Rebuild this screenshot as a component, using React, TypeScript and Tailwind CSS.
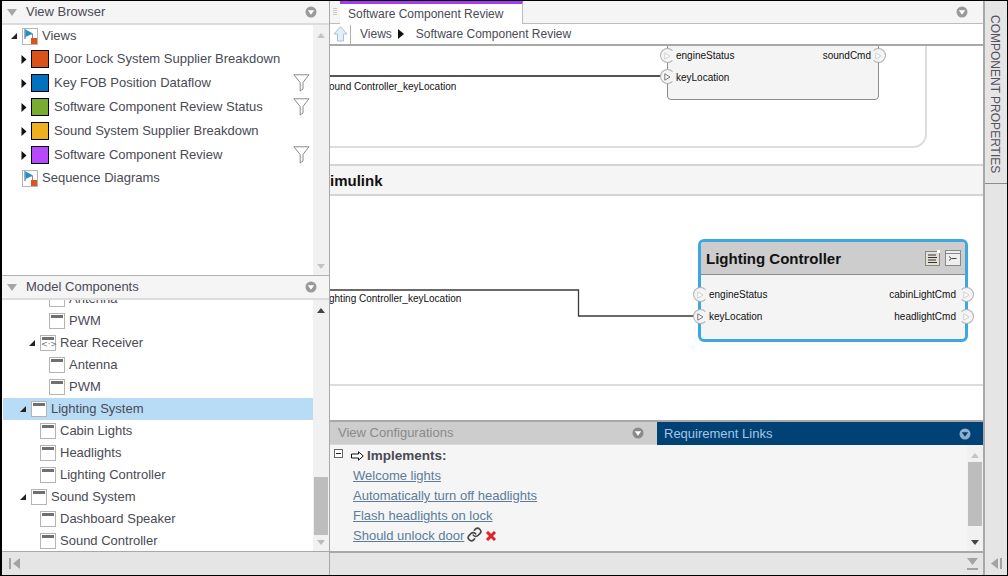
import React from "react";
import { Link } from "lucide-react";

const FONT = "font-['Liberation_Sans',Arial,sans-serif]";

function Chevron({ fill = "#9a9a9a", tri = "#ffffff" }: { fill?: string; tri?: string }) {
  return (
    <svg width="12" height="12" viewBox="0 0 12 12" className="shrink-0">
      <circle cx="6" cy="6" r="5.5" fill={fill} />
      <path d="M2.8 4.2 H9.2 L6 8.8 Z" fill={tri} />
    </svg>
  );
}

function PanelHeader({ title }: { title: string }) {
  return (
    <div className="h-[24px] shrink-0 flex items-center bg-[#f5f5f5] border-b-2 border-[#dcdcdc] pl-[5px] pr-[12px]">
      <svg width="10" height="7" viewBox="0 0 10 7" className="shrink-0">
        <path d="M0 0 H10 L5 7 Z" fill="#a6a6a6" />
      </svg>
      <span className="ml-[9px] flex-1 text-[13px] text-[#4a4a55]">{title}</span>
      <Chevron />
    </div>
  );
}

function TreeArrow({ open }: { open?: boolean }) {
  return open ? (
    <svg width="6" height="6" viewBox="0 0 6 6" className="shrink-0">
      <path d="M6 0 V6 H0 Z" fill="#222" />
    </svg>
  ) : (
    <svg width="6" height="9" viewBox="0 0 6 9" className="shrink-0">
      <path d="M0.5 0 L5.5 4.5 L0.5 9 Z" fill="#111" />
    </svg>
  );
}

function ViewsIcon() {
  return (
    <svg width="16" height="17" viewBox="0 0 16 17" className="shrink-0">
      <rect x="0.5" y="0.5" width="15" height="16" fill="#fff" stroke="#b5b5b5" />
      <path d="M3 1 V11" stroke="#2c5f8a" strokeWidth="1" />
      <path d="M3.5 1.5 L11 5.5 L3.5 9 Z" fill="#1f8fc4" />
      <path d="M9 6 H10.5 V10" stroke="#888" fill="none" />
      <rect x="9" y="10" width="6" height="6" fill="#d9541e" />
    </svg>
  );
}

function CompIcon({ code }: { code?: boolean }) {
  return (
    <div className="w-[16px] h-[16px] shrink-0 border border-[#b4b4b4] bg-white flex flex-col">
      <div className="h-[3px] mx-[1px] mt-[1px] bg-[#707070]" />
      {code && (
        <span className="text-[8px] leading-[10px] text-center text-[#777] font-['DejaVu_Sans',sans-serif]">{"<·>"}</span>
      )}
    </div>
  );
}

function Filter() {
  return (
    <svg width="17" height="18" viewBox="0 0 17 18" className="shrink-0">
      <path d="M0.8 0.8 H16 L10 8.5 V15 L7.2 17 V8.5 Z" fill="#fff" stroke="#8a8a8a" />
    </svg>
  );
}

function ViewRow({ color, label, filter }: { color: string; label: string; filter?: boolean }) {
  return (
    <div className="h-[24px] flex items-center pl-[19px] pr-[3px]">
      <TreeArrow />
      <div className="ml-[4px] w-[18px] h-[18px] border border-black shrink-0" style={{ backgroundColor: color }} />
      <span className="ml-[5px] flex-1 text-[13px] text-[#4a4a55] whitespace-nowrap">{label}</span>
      {filter && <Filter />}
    </div>
  );
}

function CompRow({
  indent,
  label,
  open,
  code,
  selected,
}: {
  indent: string;
  label: string;
  open?: boolean;
  code?: boolean;
  selected?: boolean;
}) {
  return (
    <div className={`h-[22px] flex items-center ${indent} ${selected ? "bg-[#b9dcf6]" : ""}`}>
      {open && <TreeArrow open />}
      <div className={open ? "ml-[5px]" : ""}>
        <CompIcon code={code} />
      </div>
      <span className="ml-[4px] text-[13px] text-[#4a4a55] whitespace-nowrap">{label}</span>
    </div>
  );
}

function Scrollbar({
  upColor,
  downColor,
  thumbTop,
  thumbHeight,
  bg,
}: {
  upColor: string;
  downColor: string;
  thumbTop?: number;
  thumbHeight?: number;
  bg: string;
}) {
  return (
    <div className={`w-[16px] shrink-0 relative ${bg}`}>
      <svg width="8" height="5" viewBox="0 0 8 5" className="absolute left-[4px] top-[8px]">
        <path d="M0 5 H8 L4 0 Z" fill={upColor} />
      </svg>
      {thumbHeight !== undefined && (
        <div
          className="absolute left-[1px] right-[1px] bg-[#bdbdbd]"
          style={{ top: thumbTop, height: thumbHeight }}
        />
      )}
      <svg width="8" height="5" viewBox="0 0 8 5" className="absolute left-[4px] bottom-[6px]">
        <path d="M0 0 H8 L4 5 Z" fill={downColor} />
      </svg>
    </div>
  );
}

function Port({ dark, right, className }: { dark?: boolean; right?: boolean; className: string }) {
  return (
    <div
      className={`absolute w-[15px] h-[15px] rounded-full border border-[#b0b0b0] bg-[#f4f4f4] flex items-center justify-center ${
        right ? "border-l-transparent" : "border-r-transparent"
      } ${className}`}
    >
      <svg width="7" height="8" viewBox="0 0 7 8">
        <path d="M0.8 0.8 L6 4 L0.8 7.2 Z" fill="#fff" stroke={dark ? "#777" : "#cfcfcf"} />
      </svg>
    </div>
  );
}

function Label({ className, children }: { className: string; children: React.ReactNode }) {
  return <span className={`absolute text-[10px] leading-[13px] text-[#111] whitespace-nowrap ${className}`}>{children}</span>;
}

export default function App() {
  return (
    <div className={`${FONT} w-[1008px] h-[576px] border border-black flex bg-white overflow-hidden`}>
      {/* Left column */}
      <div className="w-[329px] shrink-0 flex flex-col border-r border-[#a8a8a8] border-l border-l-black">
        <PanelHeader title="View Browser" />
        <div className="h-[251px] shrink-0 flex border-b border-[#b0b0b0]">
          <div className="flex-1 min-w-0">
            <div className="h-[22px] flex items-center pl-[9px]">
              <TreeArrow open />
              <div className="ml-[5px]">
                <ViewsIcon />
              </div>
              <span className="ml-[4px] text-[13px] text-[#4a4a55]">Views</span>
            </div>
            <ViewRow color="#d95319" label="Door Lock System Supplier Breakdown" />
            <ViewRow color="#0072bd" label="Key FOB Position Dataflow" filter />
            <ViewRow color="#77ac30" label="Software Component Review Status" filter />
            <ViewRow color="#edb120" label="Sound System Supplier Breakdown" />
            <ViewRow color="#b748fb" label="Software Component Review" filter />
            <div className="h-[22px] flex items-center pl-[20px]">
              <ViewsIcon />
              <span className="ml-[4px] text-[13px] text-[#4a4a55]">Sequence Diagrams</span>
            </div>
          </div>
          <Scrollbar upColor="#c4c4c4" downColor="#c4c4c4" bg="bg-[#f1f1f1]" />
        </div>
        <PanelHeader title="Model Components" />
        <div className="h-[251px] shrink-0 flex overflow-hidden">
          <div className="flex-1 min-w-0 pl-[1px] overflow-hidden">
            <div className="-mt-[12px]">
              <CompRow indent="pl-[46px]" label="Antenna" />
              <CompRow indent="pl-[46px]" label="PWM" />
              <CompRow indent="pl-[26px]" label="Rear Receiver" open code />
              <CompRow indent="pl-[46px]" label="Antenna" />
              <CompRow indent="pl-[46px]" label="PWM" />
              <CompRow indent="pl-[17px]" label="Lighting System" open selected />
              <CompRow indent="pl-[37px]" label="Cabin Lights" />
              <CompRow indent="pl-[37px]" label="Headlights" />
              <CompRow indent="pl-[37px]" label="Lighting Controller" />
              <CompRow indent="pl-[17px]" label="Sound System" open />
              <CompRow indent="pl-[37px]" label="Dashboard Speaker" />
              <CompRow indent="pl-[37px]" label="Sound Controller" />
            </div>
          </div>
          <Scrollbar upColor="#444" downColor="#bbb" thumbTop={177} thumbHeight={58} bg="bg-[#f1f1f1]" />
        </div>
        <div className="flex-1 bg-[#e5e5e5] border-t border-[#a8a8a8] flex items-center pl-[7px]">
          <svg width="11" height="11" viewBox="0 0 11 11">
            <rect x="0" y="0" width="2" height="11" fill="#a3a3a3" />
            <path d="M11 0 V11 L4 5.5 Z" fill="#a3a3a3" />
          </svg>
        </div>
      </div>

      {/* Main column */}
      <div className="flex-1 min-w-0 flex flex-col">
        {/* Tab strip */}
        <div className="h-[23px] shrink-0 flex bg-[#f5f5f5] border-b border-[#bdbdbd] pr-[15px]">
          <div className="w-[10px] flex flex-col gap-[1px] pt-[7px] pl-[3px]">
            <div className="w-[4px] h-[1px] bg-[#c8c8c8]" />
            <div className="w-[4px] h-[1px] bg-[#c8c8c8]" />
            <div className="w-[4px] h-[1px] bg-[#c8c8c8]" />
            <div className="w-[4px] h-[1px] bg-[#c8c8c8]" />
          </div>
          <div className="w-[183px] -mb-px bg-white border-t-[3px] border-[#a63cf0] border-r border-r-[#bdbdbd] pl-[8px] text-[12px] leading-[20px] text-[#4a4a55] whitespace-nowrap">
            Software Component Review
          </div>
          <div className="flex-1 flex items-center justify-end">
            <Chevron />
          </div>
        </div>
        {/* Breadcrumb */}
        <div className="h-[22px] shrink-0 flex items-center border-b-2 border-[#a8a8a8] pl-[3px]">
          <svg width="15" height="16" viewBox="0 0 15 16" className="shrink-0">
            <path d="M7.5 0.8 L14 8 H10.5 V15 H4.5 V8 H1 Z" fill="#e2eefa" stroke="#a9c0d6" />
          </svg>
          <div className="ml-[2px] w-px h-[19px] bg-[#b0b0b0]" />
          <span className="ml-[9px] text-[12px] text-[#4a4a55]">Views</span>
          <svg width="6" height="10" viewBox="0 0 6 10" className="ml-[6px]">
            <path d="M0 0 L6 5 L0 10 Z" fill="#111" />
          </svg>
          <span className="ml-[12px] text-[12px] text-[#4a4a55] whitespace-nowrap">Software Component Review</span>
        </div>

        {/* Canvas */}
        <div className="h-[374px] shrink-0 flex flex-col overflow-hidden">
          <div className="h-[118px] shrink-0 relative overflow-hidden">
            <div className="absolute -left-[20px] -top-[20px] w-[617px] h-[122px] rounded-br-[14px] border-2 border-[#dcdcdc]" />
            <div className="absolute left-0 top-[29px] w-[336px] h-[2px] bg-[#555555]" />
            <Label className="left-0 top-[34px]">
              <span className="inline-block -ml-[1px]">ound Controller_keyLocation</span>
            </Label>
            <div className="absolute left-[337px] -top-[6px] w-[212px] h-[60px] bg-[#f4f4f4] border-[1.5px] border-[#8c8c8c] rounded-b-[4px]" />
            <Port className="left-[330px] top-[2px]" />
            <Port className="left-[330px] top-[23px]" dark />
            <Port className="left-[541px] top-[2px]" right />
            <Label className="left-[346px] top-[3px]">engineStatus</Label>
            <Label className="left-[346px] top-[25px]">keyLocation</Label>
            <Label className="right-[112px] top-[3px]">soundCmd</Label>
          </div>
          <div className="h-[32px] shrink-0 bg-[#f5f5f5] border-y-2 border-[#d4d4d4] flex items-center overflow-hidden pt-[2px]">
            <span className="-ml-[10px] text-[15px] font-bold text-[#111]">Simulink</span>
          </div>
          <div className="h-[190px] shrink-0 relative border-b-2 border-[#dcdcdc] overflow-hidden">
            <svg width="375" height="40" viewBox="0 0 375 40" className="absolute left-0 top-[88px]">
              <path d="M0 6 H248.5 V32 H368" fill="none" stroke="#3a3a3a" strokeWidth="1.3" />
            </svg>
            <Label className="left-0 top-[96px]">
              <span className="inline-block -ml-[1px]">ghting Controller_keyLocation</span>
            </Label>
            <div className="absolute left-[368px] top-[43px] w-[270px] h-[103px] bg-[#f4f4f4] border-[3px] border-[#3ea8de] rounded-[6px] overflow-hidden">
              <div className="h-[33px] bg-[#cdcdcd] border-b border-[#8c8c8c] flex items-center pl-[5px] pr-[4px]">
                <span className="flex-1 pt-[2px] text-[15px] font-bold text-[#111] whitespace-nowrap">Lighting Controller</span>
                <svg width="16" height="16" viewBox="0 0 16 16" className="shrink-0">
                  <rect x="0.5" y="1.5" width="14" height="14" fill="#e2e0d8" stroke="#8a867a" />
                  <path d="M3 5 H11 M3 7.5 H12 M3 10 H11 M3 12.5 H12" stroke="#333" />
                  <rect x="12" y="0" width="3" height="3" fill="#fff" />
                </svg>
                <svg width="16" height="16" viewBox="0 0 16 16" className="ml-[4px] shrink-0">
                  <rect x="0.5" y="0.5" width="15" height="15" fill="#eee" stroke="#888" />
                  <path d="M0.5 3.5 H15.5" stroke="#888" />
                  <path d="M4 6.5 L6.5 8.5 L4 10.5 M7 8.5 H11.5" stroke="#444" fill="none" />
                </svg>
              </div>
            </div>
            <Port className="left-[363px] top-[91px]" />
            <Port className="left-[363px] top-[113px]" dark />
            <Port className="left-[629px] top-[91px]" right />
            <Port className="left-[629px] top-[113px]" right />
            <Label className="left-[379px] top-[92px]">engineStatus</Label>
            <Label className="left-[379px] top-[114px]">keyLocation</Label>
            <Label className="right-[27px] top-[92px]">cabinLightCmd</Label>
            <Label className="right-[27px] top-[114px]">headlightCmd</Label>
          </div>
          <div className="flex-1" />
        </div>

        {/* Bottom tabs */}
        <div className="h-[25px] shrink-0 flex border-t-2 border-[#a8a8a8]">
          <div className="w-[327px] bg-[#cdcdcd] flex items-center pl-[8px] pr-[13px] border-b border-[#dadada]">
            <span className="flex-1 text-[13px] text-[#8a8a8a]">View Configurations</span>
            <Chevron fill="#8a8a8a" />
          </div>
          <div className="flex-1 bg-[#004275] flex items-center pl-[7px] pr-[12px]">
            <span className="flex-1 text-[13px] text-[#a9c6e0]">Requirement Links</span>
            <Chevron fill="#8fb0cc" tri="#004275" />
          </div>
        </div>

        {/* Requirement content */}
        <div className="h-[106px] shrink-0 flex bg-[#f5f5f5]">
          <div className="flex-1 min-w-0 pl-[4px] pt-[1px]">
            <div className="h-[20px] flex items-center">
              <div className="w-[9px] h-[9px] border border-[#666] bg-white flex items-center justify-center -mt-[6px]">
                <div className="w-[5px] h-px bg-[#222]" />
              </div>
              <svg width="13" height="10" viewBox="0 0 13 10" className="ml-[8px] shrink-0">
                <path d="M0.5 3 H7.5 V0.8 L12.3 5 L7.5 9.2 V7 H0.5 Z" fill="#fff" stroke="#111" />
              </svg>
              <span className="ml-[3px] pt-[1px] text-[13.5px] font-bold text-[#4a4a55]">Implements:</span>
            </div>
            <div className="pl-[19px] text-[13px] text-[#5b7c9c]">
              <div className="h-[20px] leading-[20px] underline">Welcome lights</div>
              <div className="h-[20px] leading-[20px] underline">Automatically turn off headlights</div>
              <div className="h-[20px] leading-[20px] underline">Flash headlights on lock</div>
              <div className="h-[20px] leading-[20px] flex items-center">
                <span className="underline">Should unlock door</span>
                <Link size={15} strokeWidth={2.6} className="ml-[3px] -mt-[3px] text-[#444]" />
                <svg width="12" height="10" viewBox="0 0 12 10" className="ml-[3px]">
                  <path d="M2 1 L10 9 M10 1 L2 9" stroke="#e0202a" strokeWidth="3" />
                </svg>
              </div>
            </div>
          </div>
          <Scrollbar upColor="#c4c4c4" downColor="#444" thumbTop={17} thumbHeight={64} bg="bg-[#f1f1f1]" />
        </div>
        <div className="flex-1 bg-[#e5e5e5] border-t-2 border-[#a8a8a8] flex items-center justify-end pr-[5px]">
          <svg width="11" height="12" viewBox="0 0 11 12">
            <path d="M0 0 H11 L5.5 7 Z" fill="#a3a3a3" />
            <rect x="0" y="10" width="11" height="2" fill="#a3a3a3" />
          </svg>
        </div>
      </div>

      {/* Right strip */}
      <div className="w-[24px] shrink-0 flex flex-col bg-[#e5e5e5] border-l-2 border-[#a8a8a8]">
        <div className="h-[183px] shrink-0 border-b border-[#8f8f8f] pt-[14px] pr-[3px] flex justify-center">
          <span className="[writing-mode:vertical-rl] text-[12px] leading-none text-[#55505f] whitespace-nowrap">
            COMPONENT PROPERTIES
          </span>
        </div>
        <div className="flex-1" />
        <div className="h-[23px] shrink-0 flex items-center justify-center">
          <svg width="11" height="11" viewBox="0 0 11 11">
            <path d="M7 0 V11 L0 5.5 Z" fill="#a3a3a3" />
            <rect x="9" y="0" width="2" height="11" fill="#a3a3a3" />
          </svg>
        </div>
      </div>
    </div>
  );
}
